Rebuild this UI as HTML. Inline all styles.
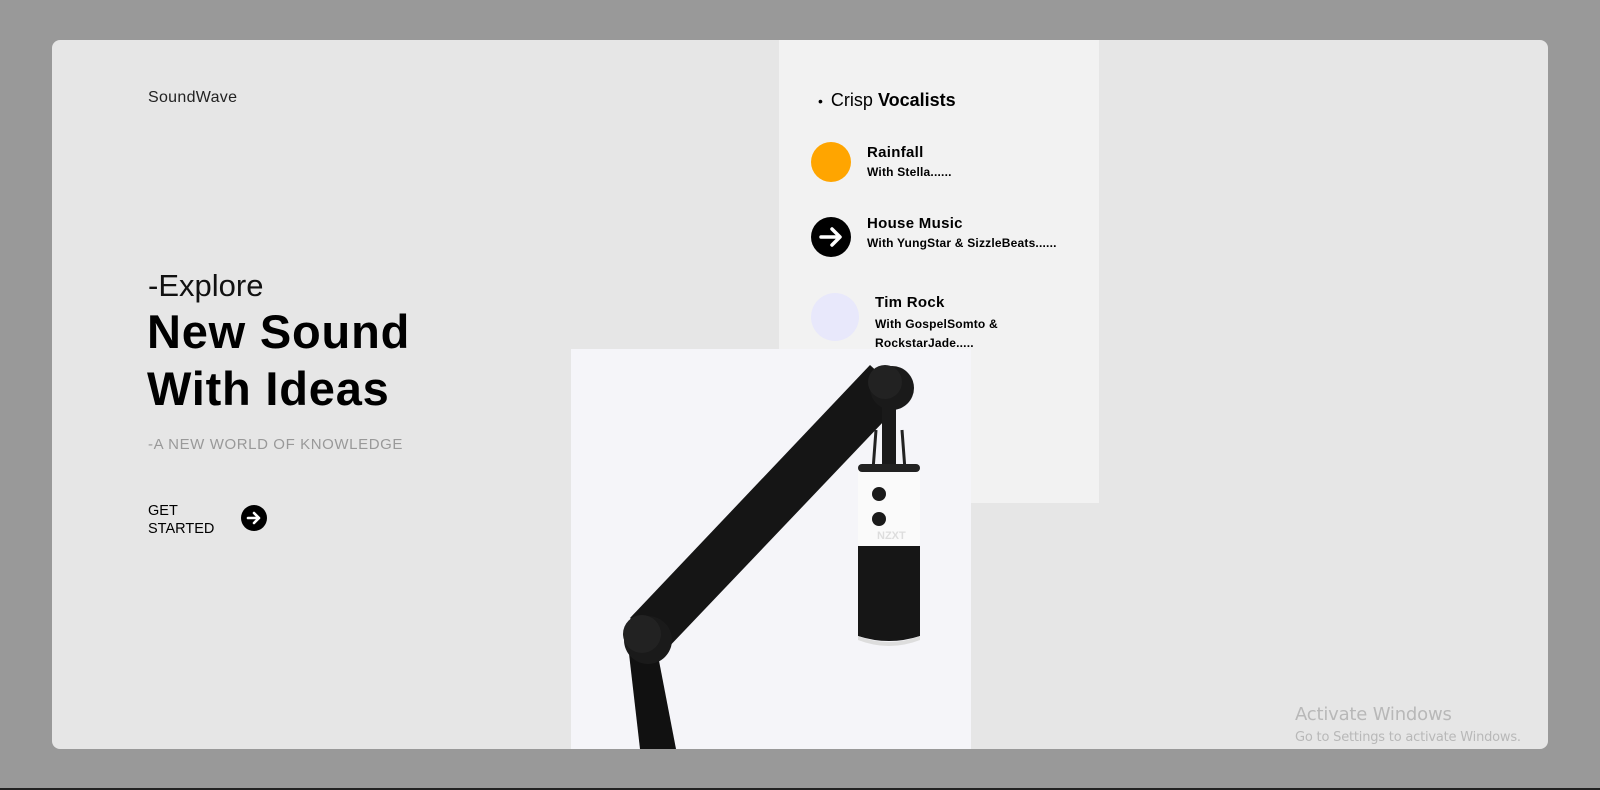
<!DOCTYPE html>
<html><head><meta charset="utf-8"><style>
*{margin:0;padding:0;box-sizing:border-box}
body{width:1600px;height:790px;background:#999;position:relative;overflow:hidden;font-family:"Liberation Sans",sans-serif;color:#000}
.card{position:absolute;left:52px;top:40px;width:1496px;height:709px;background:#e6e6e6;border-radius:8px;overflow:hidden}
.a{position:absolute;white-space:nowrap}
.panel{position:absolute;left:727px;top:0;width:320px;height:463px;background:#f2f2f2}
.t{font-size:15px;font-weight:bold;letter-spacing:0.3px}
.s{font-size:12px;font-weight:bold;letter-spacing:0.2px}
.c{position:absolute;border-radius:50%}
</style></head><body>
<div class="card">
  <div class="a" style="left:96px;top:49px;font-size:16px;color:#222;letter-spacing:0.3px">SoundWave</div>
  <div class="a" style="left:96px;top:228px;font-size:31px;font-weight:300;color:#111">-Explore</div>
  <div class="a" style="left:95px;top:263px;font-size:47px;font-weight:bold;line-height:57px;letter-spacing:0.8px">New Sound<br>With Ideas</div>
  <div class="a" style="left:96px;top:396px;font-size:15px;color:#999;letter-spacing:0.6px">-A NEW WORLD OF KNOWLEDGE</div>
  <div class="a" style="left:96px;top:462px;font-size:14.5px;line-height:18px">GET<br>STARTED</div>
  <svg class="a" style="left:188px;top:464px" width="28" height="28" viewBox="0 0 28 28"><circle cx="14" cy="14" r="13" fill="#000"/><path d="M8 14h11M14 9l5 5-5 5" stroke="#fff" stroke-width="2.6" fill="none" stroke-linecap="round" stroke-linejoin="round"/></svg>

  <div class="panel">
    <div class="a" style="left:39px;top:50px;font-size:18px"><span style="font-size:14px;margin-right:8px">•</span><span style="font-weight:300">Crisp</span> <b>Vocalists</b></div>
    <div class="c" style="left:32px;top:102px;width:40px;height:40px;background:#ffa500"></div>
    <div class="a t" style="left:88px;top:104px">Rainfall</div>
    <div class="a s" style="left:88px;top:125px">With Stella......</div>
    <svg class="a" style="left:32px;top:177px" width="40" height="40" viewBox="0 0 40 40"><circle cx="20" cy="20" r="20" fill="#000"/><path d="M10 20h18M21 12l8 8-8 8" stroke="#fff" stroke-width="3.5" fill="none" stroke-linecap="round" stroke-linejoin="round"/></svg>
    <div class="a t" style="left:88px;top:175px">House Music</div>
    <div class="a s" style="left:88px;top:196px">With YungStar &amp; SizzleBeats......</div>
    <div class="c" style="left:32px;top:253px;width:48px;height:48px;background:#e8e8fb"></div>
    <div class="a t" style="left:96px;top:254px">Tim Rock</div>
    <div class="a s" style="left:96px;top:275px;line-height:19px">With GospelSomto &amp;<br>RockstarJade.....</div>
  </div>

  <svg class="a" style="left:519px;top:309px" width="400" height="400" viewBox="571 349 400 400">
    <rect x="571" y="349" width="400" height="400" fill="#f5f5f9"/>
    <path d="M628 645 L655 640 L676 749 L640 749 Z" fill="#111"/>
    <path d="M630 618 L870 365 L906 398 L664 652 Z" fill="#151515"/>
    <circle cx="648" cy="640" r="24" fill="#1a1a1a"/>
    <circle cx="642" cy="634" r="19" fill="#222"/>
    <circle cx="892" cy="388" r="22" fill="#1a1a1a"/>
    <circle cx="885" cy="382" r="17" fill="#222"/>
    <rect x="882" y="400" width="14" height="70" fill="#1a1a1a"/>
    <path d="M876 430 L873 470 M902 430 L905 470" stroke="#222" stroke-width="3"/>
    <rect x="858" y="466" width="62" height="82" rx="6" fill="#fafafa"/>
    <rect x="858" y="464" width="62" height="8" rx="4" fill="#222"/>
    <circle cx="879" cy="494" r="7" fill="#1a1a1a"/>
    <circle cx="879" cy="519" r="7" fill="#1a1a1a"/>
    <text x="877" y="539" font-size="11" font-weight="bold" fill="#ddd" font-family="Liberation Sans">NZXT</text>
    <path d="M858 546 H920 V636 Q889 646 858 636 Z" fill="#161616"/>
    <path d="M858 636 Q889 648 920 636 L920 640 Q889 652 858 640 Z" fill="#ddd"/>
  </svg>

  <div class="a" style="left:1243px;top:664px;font-size:18px;color:#b8b8b8;font-family:'DejaVu Sans',sans-serif;letter-spacing:-0.2px">Activate Windows</div>
  <div class="a" style="left:1243px;top:690px;font-size:13px;color:#b8b8b8;font-family:'DejaVu Sans',sans-serif;letter-spacing:-0.2px">Go to Settings to activate Windows.</div>
</div>
<div style="position:absolute;left:0;top:788px;width:1600px;height:2px;background:#222"></div>
</body></html>
